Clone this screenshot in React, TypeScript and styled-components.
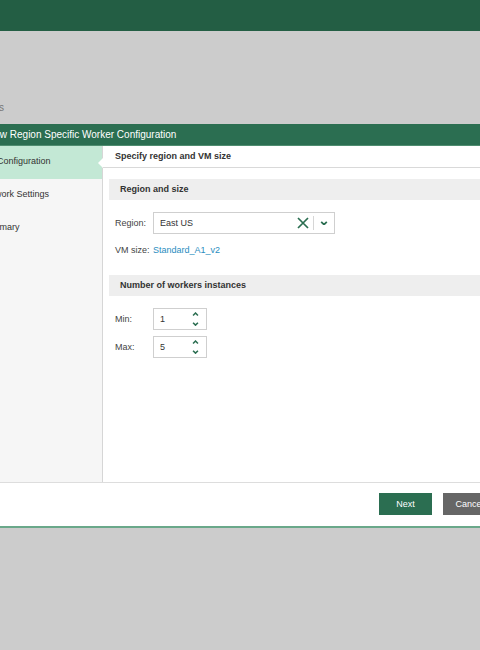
import React from 'react';
import styled, { createGlobalStyle } from 'styled-components';

const GlobalStyle = createGlobalStyle`
  html, body {
    margin: 0;
    padding: 0;
    background: #cccccc;
    font-family: "Liberation Sans", Arial, sans-serif;
    overflow: hidden;
  }
`;

const NAV_ITEMS = [
  { id: 'config', label: 'VM Configuration', active: true },
  { id: 'network', label: 'Network Settings', active: false },
  { id: 'summary', label: 'Summary', active: false },
];

// ICONS
const ClearIcon = () => (
  <svg width="12" height="12" viewBox="0 0 12 12">
    <path d="M1 1 L11 11 M11 1 L1 11" stroke="#2b6e51" strokeWidth="1.7" fill="none" />
  </svg>
);

const ChevronDown = ({ size = 7 }: { size?: number }) => (
  <svg width={size} height={size * 0.6} viewBox="0 0 10 6">
    <path d="M1.5 1 L5 4.5 L8.5 1" stroke="#2b6e51" strokeWidth="2.2" fill="none" />
  </svg>
);

const ChevronUp = ({ size = 7 }: { size?: number }) => (
  <svg width={size} height={size * 0.6} viewBox="0 0 10 6">
    <path d="M1.5 5 L5 1.5 L8.5 5" stroke="#2b6e51" strokeWidth="2.2" fill="none" />
  </svg>
);

const Spinner = ({ value }: { value: number }) => (
  <SpinBox>
    <SpinValue>{value}</SpinValue>
    <SpinArrows>
      <ChevronUp />
      <ChevronDown />
    </SpinArrows>
  </SpinBox>
);

// COMPONENT
export default function App() {
  return (
    <>
      <GlobalStyle />
      <TopBar />
      <Page>
        <PageTitle>Workers</PageTitle>
        <Dialog>
          <DialogHeader>New Region Specific Worker Configuration</DialogHeader>
          <DialogBody>
            <Nav>
              {NAV_ITEMS.map(item => (
                <NavItem key={item.id} $active={item.active}>{item.label}</NavItem>
              ))}
            </Nav>
            <Content>
              <StepTitle>Specify region and VM size</StepTitle>
              <Sections>
                <SectionBar>Region and size</SectionBar>
                <FieldRow $gap={12}>
                  <Label>Region:</Label>
                  <Combo>
                    <ComboText>East US</ComboText>
                    <ComboClear><ClearIcon /></ComboClear>
                    <ComboToggle><ChevronDown size={8} /></ComboToggle>
                  </Combo>
                </FieldRow>
                <FieldRow $gap={5}>
                  <Label>VM size:</Label>
                  <Link>Standard_A1_v2</Link>
                </FieldRow>
                <SectionBar $gap>Number of workers instances</SectionBar>
                <FieldRow $gap={12}>
                  <Label>Min:</Label>
                  <Spinner value={1} />
                </FieldRow>
                <FieldRow $gap={6}>
                  <Label>Max:</Label>
                  <Spinner value={5} />
                </FieldRow>
              </Sections>
            </Content>
          </DialogBody>
          <Footer>
            <Button $primary>Next</Button>
            <Button>Cancel</Button>
          </Footer>
        </Dialog>
      </Page>
    </>
  );
}

// STYLING
const TopBar = styled.div`
  height: 31px;
  background: #235e44;
`;
const Page = styled.div`
  padding-top: 70px;
`;
const PageTitle = styled.div`
  margin-left: -33px;
  height: 23px;
  font-size: 10px;
  color: #777;
  line-height: 14px;
  white-space: nowrap;
`;
const Dialog = styled.div`
  margin-left: -32px;
  width: 560px;
  background: #fff;
  border-bottom: 2px solid #6aa88a;
`;
const DialogHeader = styled.div`
  height: 21px;
  line-height: 21px;
  padding-left: 19px;
  background: #2b6e51;
  border-bottom: 1px solid #4f8d70;
  color: #fff;
  font-size: 10px;
  white-space: nowrap;
`;
const DialogBody = styled.div`
  display: flex;
  height: 336px;
  border-bottom: 1px solid #dddddd;
`;
const Nav = styled.div`
  width: 134px;
  background: #f6f6f6;
  border-right: 1px solid #d6d6d6;
`;
const NavItem = styled.div<{ $active?: boolean }>`
  position: relative;
  height: 33px;
  line-height: 31px;
  padding-left: 13px;
  font-size: 9px;
  color: #333;
  white-space: nowrap;
  background: ${p => (p.$active ? '#c3e8d5' : 'transparent')};

  &::after {
    content: '';
    display: ${p => (p.$active ? 'block' : 'none')};
    position: absolute;
    right: -1px;
    top: 12px;
    border-style: solid;
    border-width: 5px 5px 5px 0;
    border-color: transparent #fff transparent transparent;
  }
`;
const Content = styled.div`
  flex: 1;
`;
const StepTitle = styled.div`
  height: 21px;
  line-height: 21px;
  padding-left: 12px;
  font-size: 9px;
  font-weight: bold;
  color: #333;
  border-bottom: 1px solid #d9d9d9;
`;
const Sections = styled.div`
  padding: 11px 0 0 6px;
`;
const SectionBar = styled.div<{ $gap?: boolean }>`
  height: 21px;
  line-height: 21px;
  padding-left: 11px;
  margin-top: ${p => (p.$gap ? '14px' : '0')};
  background: #eeeeee;
  font-size: 9px;
  font-weight: bold;
  color: #333;
`;
const FieldRow = styled.div<{ $gap: number }>`
  display: flex;
  align-items: center;
  min-height: 22px;
  padding-left: 6px;
  margin-top: ${p => p.$gap}px;
`;
const Label = styled.div`
  width: 38px;
  font-size: 9px;
  color: #444;
  white-space: nowrap;
`;
const Combo = styled.div`
  display: flex;
  align-items: center;
  width: 180px;
  height: 20px;
  border: 1px solid #cfcfcf;
  background: #fff;
`;
const ComboText = styled.div`
  flex: 1;
  padding-left: 6px;
  font-size: 9px;
  color: #333;
`;
const ComboClear = styled.div`
  display: flex;
  align-items: center;
  padding-right: 4px;
  height: 14px;
  border-right: 1px solid #d6d6d6;
`;
const ComboToggle = styled.div`
  display: flex;
  align-items: center;
  justify-content: center;
  width: 20px;
  height: 100%;
`;
const Link = styled.span`
  font-size: 9px;
  color: #2a8dc0;
`;
const SpinBox = styled.div`
  display: flex;
  align-items: center;
  width: 52px;
  height: 20px;
  border: 1px solid #cfcfcf;
  background: #fff;
`;
const SpinValue = styled.div`
  flex: 1;
  padding-left: 6px;
  font-size: 9px;
  color: #333;
`;
const SpinArrows = styled.div`
  display: flex;
  flex-direction: column;
  align-items: center;
  gap: 5px;
  width: 22px;
`;
const Footer = styled.div`
  display: flex;
  gap: 11px;
  padding: 10px 0 0 411px;
  height: 33px;
`;
const Button = styled.button<{ $primary?: boolean }>`
  width: 53px;
  height: 22px;
  border: 0;
  padding: 0;
  font-family: "Liberation Sans", Arial, sans-serif;
  font-size: 9px;
  color: #fff;
  background: ${p => (p.$primary ? '#2b6e51' : '#666666')};
`;
